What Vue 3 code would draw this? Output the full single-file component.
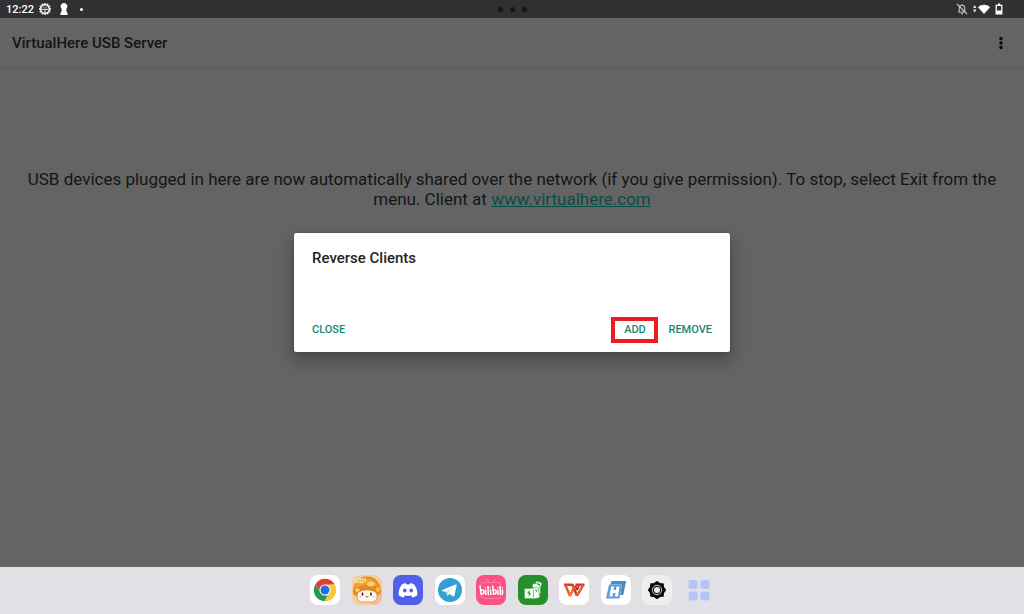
<script setup>
const teeth = Array.from({ length: 12 }, (_, i) => i * 30)
</script>

<template>
  <div class="screen">
    <header class="status">
      <div class="status-side">
        <time>12:22</time>
        <svg class="s-icon" viewBox="0 0 12 12" aria-hidden="true">
          <g fill="#ececec">
            <rect v-for="a in teeth" :key="a" x="5.1" y="0" width="1.8" height="2.2" :transform="`rotate(${a} 6 6)`" />
          </g>
          <circle cx="6" cy="6" r="4.3" fill="none" stroke="#ececec" stroke-width="1.4" />
          <path d="M2.5 6.300h7M6 6v3.5" stroke="#ececec" stroke-width="1" />
          <path d="M3.5 4.200h5" stroke="#999" stroke-width=".8" />
        </svg>
        <svg class="s-icon" viewBox="0 0 12 12" aria-hidden="true">
          <path fill="#fff" d="M6 0a3.500 3.300 0 0 1 2.300 5.700L8.600 9 9.600 10v2H2.400v-2l1-1 .3-3.300A3.500 3.300 0 0 1 6 0z" />
        </svg>
        <i class="note-dot"></i>
      </div>
      <div class="handle"><i></i><i></i><i></i></div>
      <div class="status-side right">
        <svg class="bell" viewBox="0 0 12 12" aria-hidden="true">
          <path fill="none" stroke="#c4c4c4" stroke-width="1.1" d="M2 9h8M3.300 9V5a2.700 2.700 0 0 1 5.400 0v4M6 2.300V1M5 10.600h2M1 1l10 10" />
        </svg>
        <svg class="wifi" viewBox="0 0 17 12" aria-hidden="true">
          <path fill="#e6e6e6" d="M0 5l1.700-3L3.400 5zM0 6.500h3.400L1.700 9.500z" />
          <path fill="#fff" d="M5 4.200C8 .9 14 .9 17 4.200L11 11z" />
        </svg>
        <svg class="battery" viewBox="0 0 8 12" aria-hidden="true">
          <path fill="none" stroke="#fff" stroke-width="1.300" d="M1.200 2.300h5.600v8.500H1.200zM2.800 1.200h2.400" />
          <path fill="#fff" d="M1.500 7.500h5V11h-5z" />
        </svg>
      </div>
    </header>

    <div class="app">
      <div class="appbar">
        <h1>VirtualHere USB Server</h1>
        <button class="more" aria-label="More options">
          <svg viewBox="0 0 6 14" aria-hidden="true">
            <circle cx="3" cy="2.500" r="1.700" /><circle cx="3" cy="7" r="1.700" /><circle cx="3" cy="11.500" r="1.700" />
          </svg>
        </button>
      </div>
      <main>
        <p>USB devices plugged in here are now automatically shared over the network (if you give permission). To stop, select Exit from the menu. Client at <a href="#">www.virtualhere.com</a></p>
      </main>
      <div class="scrim">
        <section class="dialog" role="dialog" aria-labelledby="dialog-title">
          <h2 id="dialog-title">Reverse Clients</h2>
          <div class="actions">
            <button class="close">CLOSE</button>
            <button class="add">ADD</button>
            <button>REMOVE</button>
          </div>
        </section>
      </div>
    </div>

    <nav class="dock" aria-label="Apps">
      <button class="tile white" aria-label="Chrome">
        <svg viewBox="0 0 30 30">
          <path fill="#dd4335" d="M5.300 9.400A11.200 11.200 0 0 1 24.700 9.400L15 10.500 10.500 17.500z" />
          <path fill="#229a51" d="M5.300 9.400L10.500 17.600 15 20.500 18 20 14.600 26.200A11.200 11.200 0 0 1 5.300 9.400z" />
          <path fill="#fcc934" d="M15 9.500H24.800A11.200 11.200 0 0 1 14.400 26.200L19.600 17.600z" />
          <circle cx="15" cy="15" r="5.500" fill="#fff" /><circle cx="15" cy="15" r="4.500" fill="#1f6fe5" />
        </svg>
      </button>
      <button class="tile" aria-label="Mushroom game">
        <svg viewBox="0 0 30 30">
          <path fill="#f3cd9c" d="M0 0h30v30H0z" />
          <path fill="#f4ad8b" d="M22 22l8-5v13h-9z" opacity=".5" />
          <path fill="#e88a1c" d="M1 17.500C1 9 6 1.500 15 1.500S29 9 29 16.500c-.5 4-4 4-7 2.500-4-2-9-2-13 .5-3.500 2-7.500 2-8-2z" />
          <path fill="#f5a335" d="M3 13C5 6 10 3.500 15 3.500c6 0 9 4 11 8.500-8-3-15-3-23 1z" />
          <ellipse cx="18.500" cy="9" rx="3.500" ry="2.300" fill="#ffd378" />
          <ellipse cx="5.300" cy="15" rx="2.300" ry="1.800" fill="#ffd06b" />
          <ellipse cx="26" cy="14.500" rx="1.800" ry="2.200" fill="#ffc052" />
          <path fill="#fff6e8" stroke="#b98556" stroke-width=".7" d="M6 17.500c4-3.500 14-3.500 18 0 2.500 4.500.5 8.500-3 9.500H9.500C5.500 26 4 22 6 17.500z" />
          <path fill="none" stroke="#3b211b" stroke-width="1.600" stroke-linecap="round" d="M10.500 18.300v1.600M19 18.300v1.600" />
          <path fill="none" stroke="#7c4630" stroke-width=".9" d="M13.500 21.300q1.500 1.200 3 0" />
          <circle cx="8.300" cy="21.800" r="1.100" fill="#f9c5b0" /><circle cx="21.500" cy="21.800" r="1.100" fill="#f9c5b0" />
          <path fill="none" stroke="#fff1b5" stroke-width="1.100" d="M3.500 3.500v4h2.500v-4M8 3v4.500h3V4H8M12.500 3l1.500 3.500" />
        </svg>
      </button>
      <button class="tile discord" aria-label="Discord">
        <svg viewBox="0 0 30 30">
          <path fill="#fff" fill-rule="evenodd" d="M9 9.300Q11 8.400 12.700 8.100L13.400 9.400Q15 9.200 16.600 9.400L17.300 8.100Q19 8.400 21 9.300Q24.900 14.500 24.300 20.200Q21.800 21.900 19.400 22.500L18.200 20.600L19.500 19.900Q15 21.700 10.500 19.900L11.800 20.600L10.600 22.500Q8.200 21.900 5.700 20.200Q5.100 14.500 9 9.300zM11.800 13.400a1.900 2 0 1 0 .01 4a1.900 2 0 1 0-.01-4zM18.200 13.400a1.900 2 0 1 0 .01 4a1.900 2 0 1 0-.01-4z" />
        </svg>
      </button>
      <button class="tile white" aria-label="Telegram">
        <svg viewBox="0 0 30 30">
          <circle cx="15" cy="15" r="12" fill="#329fd5" />
          <path fill="#fff" d="M6.800 15.200L20.500 9.500q1.400-.5 1.100 1L19.400 20.700q-.3 1.300-1.500.5L14.600 18.700 12.900 20.400q-.7.500-.9-.5L11.200 16.900 7 15.900q-.8-.3-.2-.7z" />
          <path fill="#b9d9ea" d="M11.200 16.900L18.700 12 13.300 17.300 12.600 20.500q-.5 0-.6-.6z" />
        </svg>
      </button>
      <button class="tile bili" aria-label="Bilibili">
        <svg viewBox="0 0 30 30">
          <path fill="none" stroke="#ff83aa" stroke-linecap="round" d="M10.500 4l3 3.500M19.500 4l-3 3.500" />
          <rect x="5" y="7.500" width="20" height="16" rx="3" fill="none" stroke="#ff7ca4" />
          <g fill="none" stroke="#fff" stroke-width="1.500" stroke-linecap="round">
            <path d="M4 11l1 8M5 15.500c3.500-2 4.500 3 .2 3.800M9.500 15l.3 4.500M12 11.500l.3 8M14.500 15l.2 4.500" />
            <path d="M16.700 11l.7 8M17.300 15.500c3.500-2 4.500 3 .2 3.800M21.800 15l.2 4.500M24 11.500l.3 8M26.500 15l-.1 4.500" />
            <path stroke-width="1" d="M9.300 12.500v.5M14.300 12.500v.5M21.600 12.500v.5M26.500 12.500v.5" />
          </g>
        </svg>
      </button>
      <button class="tile green" aria-label="Solitaire">
        <svg viewBox="0 0 30 30">
          <g fill="#f4fff2" stroke="#4ba34d" stroke-width=".6">
            <rect x="16.500" y="6.500" width="6" height="10" rx="1" transform="rotate(14 19 13)" />
            <rect x="15" y="8.500" width="7" height="11" rx="1" transform="rotate(-10 18 14)" />
            <rect x="13" y="12.500" width="8" height="11" rx="1" transform="rotate(-12 17 18)" />
            <rect x="6.500" y="13.500" width="9" height="10" rx="1" />
          </g>
          <path fill="#258f2b" d="M11.500 15l-2.500 3.500h2L10.500 22l2.500-4h-1.500z" />
          <path stroke="#258f2b" stroke-width="1.200" d="M19.500 9l2 1M17.500 14.500l1.500 2" />
        </svg>
      </button>
      <button class="tile white" aria-label="WPS Office">
        <svg viewBox="0 0 30 30">
          <g fill="none" stroke-width="2.400" stroke-linejoin="bevel">
            <path stroke="#d63a24" d="M5 9.800H13.700L17.900 20.800" />
            <path stroke="#e3572a" d="M6.200 9.800L11 20.800 15.600 11.500" />
            <path stroke="#ef7a32" d="M9.800 18L11 20.800 13.500 16" />
            <path stroke="#d93724" d="M25.500 9.800H16.500" />
            <path stroke="#e55a2b" d="M24.300 9.800L18 20.800" />
            <path stroke="#c82d20" stroke-width="1.800" d="M16.500 10.500L18 15 20 11" />
          </g>
        </svg>
      </button>
      <button class="tile white" aria-label="Remote display">
        <svg viewBox="0 0 30 30">
          <path fill="#4a8cc4" d="M10.500 6H25.200L22.300 20H19L21 9.500H9.500z" />
          <path fill="#60a0d4" d="M8 9.500H21L18.500 23.500H5z" />
          <path fill="#fff" d="M10.200 11.500H13L12.500 15H15L15.500 11.500H18.500L17 21.500H14L14.500 18H12L11.500 21.500H8.500z" />
        </svg>
      </button>
      <button class="tile gear" aria-label="Settings">
        <svg viewBox="0 0 30 30">
          <path fill="#090909" stroke="#090909" stroke-width="1.500" stroke-linejoin="round" d="M15 6.800L17.800 8.700 21 8.900 21.300 12.200 23.300 15 21.300 17.800 21 21.100 17.800 21.300 15 23.300 12.200 21.300 9 21.100 8.700 17.800 6.700 15 8.700 12.200 9 8.900 12.200 8.700z" />
          <circle cx="15" cy="15" r="4.700" fill="#111" stroke="#ddd" stroke-width=".9" />
          <circle cx="15" cy="15" r="3" fill="#eee" />
        </svg>
      </button>
      <button class="tile drawer" aria-label="All apps">
        <svg viewBox="0 0 30 30" fill="#b6c3f5">
          <rect x="4.500" y="5" width="9" height="9" rx="2.500" /><rect x="16.500" y="5" width="9" height="9" rx="2.500" />
          <rect x="4.500" y="16.500" width="9" height="9" rx="2.500" /><rect x="16.500" y="16.500" width="9" height="9" rx="2.500" />
        </svg>
      </button>
    </nav>
  </div>
</template>

<style>
body { margin: 0; }
</style>

<style scoped>
.screen {
  display: flex;
  flex-direction: column;
  min-height: 100vh;
  font-family: Roboto, "Liberation Sans", sans-serif;
}
.screen * { box-sizing: border-box; }
button { padding: 0; border: 0; background: none; font: inherit; color: inherit; cursor: pointer; }
svg { display: block; }
.status {
  display: grid;
  grid-template-columns: 1fr auto 1fr;
  align-items: center;
  height: 18px;
  background: #303030;
  color: #fff;
  font-size: 11px;
  font-weight: 500;
}
.status-side { display: flex; align-items: center; gap: 5px; padding-left: 6px; }
.right { justify-content: flex-end; padding-right: 21px; }
.s-icon { width: 12px; height: 12px; }
.s-icon + .s-icon { margin-left: 2px; }
.note-dot { width: 3px; height: 3px; margin-left: 5px; border-radius: 50%; background: #fff; }
.handle { display: flex; gap: 7px; }
.handle i { width: 5px; height: 5px; border-radius: 50%; background: #161616; }
.bell { width: 12px; height: 12px; }
.wifi { width: 17px; height: 12px; }
.battery { width: 8px; height: 12px; }
.app {
  position: relative;
  flex: 1;
  display: flex;
  flex-direction: column;
  background: #646464;
  color: #151515;
}
.appbar {
  display: flex;
  align-items: center;
  justify-content: space-between;
  height: 51px;
  padding: 0 20px 0 12px;
  border-bottom: 1px solid #5b5b5b;
}
h1, h2 { margin: 0; font-weight: 500; }
h1 { font-size: 15px; line-height: 20px; }
.more svg { width: 6px; height: 14px; fill: #080808; }
main { padding: 100px 24px 0; text-align: center; }
p { margin: 0; font-size: 17px; line-height: 20px; }
a { color: #044f45; }
.scrim {
  position: absolute;
  inset: 0;
  display: flex;
  align-items: center;
  justify-content: center;
  pointer-events: none;
}
.dialog {
  display: flex;
  flex-direction: column;
  justify-content: space-between;
  width: 436px;
  max-width: 90%;
  min-height: 119px;
  padding: 15px 18px 9px;
  border-radius: 2px;
  background: #fff;
  color: #242424;
  box-shadow: 0 8px 16px 2px rgba(0, 0, 0, 0.25), 0 0 2px rgba(0, 0, 0, 0.3);
  pointer-events: auto;
}
h2 { font-size: 15px; line-height: 20px; }
.actions {
  display: flex;
  align-items: center;
  gap: 10px;
  color: #168775;
  font-size: 11px;
  font-weight: 500;
  line-height: 12px;
}
.close { margin-right: auto; }
.add { width: 47px; height: 26px; border: 4px solid #ed1c24; }
.dock {
  display: flex;
  align-items: center;
  justify-content: space-between;
  height: 47px;
  padding: 0 calc(50% - 202px) 2px;
  background: #e3e0e5;
}
.tile { width: 30px; height: 30px; border-radius: 8px; overflow: hidden; }
.tile svg { width: 30px; height: 30px; }
.white { background: #fff; }
.discord { background: #525fe8; }
.bili { background: #fb5286; }
.green { background: #258f2b; }
.gear { background: #efeeef; }
.drawer { background: #e1e0ea; }
</style>
